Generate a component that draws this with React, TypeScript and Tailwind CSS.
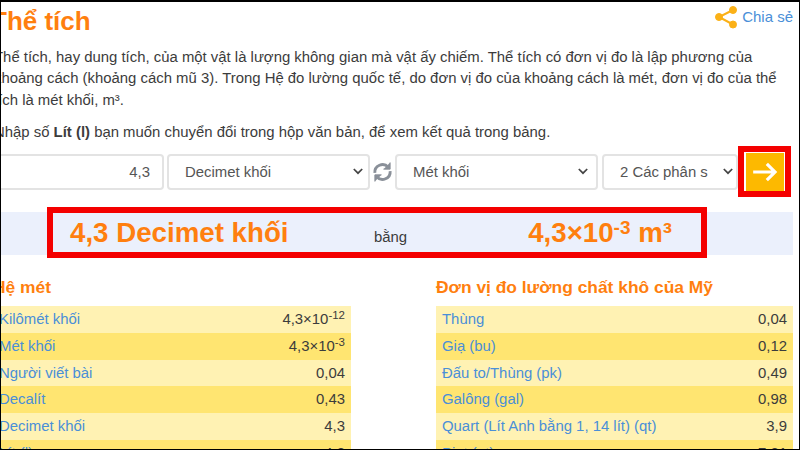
const sans = "font-['Liberation_Sans',Arial,sans-serif]";

const left: [string, React.ReactNode][] = [
  ["Kilômét khối", <>4,3×10<span className="relative top-[-5px] text-[11.5px] leading-none">-12</span></>],
  ["Mét khối", <>4,3×10<span className="relative top-[-5px] text-[11.5px] leading-none">-3</span></>],
  ["Người viết bài", "0,04"],
  ["Decalít", "0,43"],
  ["Decimet khối", "4,3"],
  ["Lít (l)", "4,3"],
];
const right: [string, string][] = [
  ["Thùng", "0,04"],
  ["Giạ (bu)", "0,12"],
  ["Đấu to/Thùng (pk)", "0,49"],
  ["Galông (gal)", "0,98"],
  ["Quart (Lít Anh bằng 1, 14 lít) (qt)", "3,9"],
  ["Pint (pt)", "7,81"],
];

function Table({ rows }: { rows: [string, React.ReactNode][] }) {
  return (
    <div>
      {rows.map(([k, v], i) => (
        <div key={k} className={`flex h-[26.7px] shrink-0 items-center justify-between px-[6px] text-[14.9px] ${i % 2 ? "bg-[#ffe571]" : "bg-[#fff2b3]"}`}>
          <span className="text-[#4a8fd8]">{k}</span>
          <span className="text-[#3c3c3c]">{v}</span>
        </div>
      ))}
    </div>
  );
}

function Select({ label, className }: { label: string; className: string }) {
  return (
    <div className={`flex h-[36px] shrink-0 items-center justify-between rounded-[4px] border-2 border-[#e3e3e3] bg-white text-[#555] ${className}`}>
      <span>{label}</span>
      <svg width="10" height="7" viewBox="0 0 10 7" fill="none" stroke="#444" strokeWidth="1.7"><path d="M.8 1 5 5.2 9.2 1" /></svg>
    </div>
  );
}

export default function App() {
  return (
    <div className={`h-[450px] w-[800px] overflow-hidden border-x border-t-2 border-b border-black bg-white text-[14.9px] text-[#3c3c3c] ${sans}`}>
      <div className="flex h-[46px] items-center justify-between pr-[6px]">
        <h1 className="mb-[8px] ml-[-10px] text-[26px] font-bold text-[#ff7f0f]">Thể tích</h1>
        <div className="mb-[16px] flex items-center gap-[4px]">
          <svg width="24" height="24" viewBox="0 0 24 24" fill="#fbb117" stroke="#fbb117"><circle cx="19" cy="5" r="3.5" /><circle cx="5" cy="12" r="3.5" /><circle cx="19" cy="19.5" r="3.5" /><path d="M19 5 5 12l14 7.5" fill="none" strokeWidth="2" /></svg>
          <span className="text-[15px] text-[#4a8fd8]">Chia sẻ</span>
        </div>
      </div>
      <div className="ml-[-7px] mt-[-1px] w-[790px] leading-[21.3px]">
        <p>Thể tích, hay dung tích, của một vật là lượng không gian mà vật ấy chiếm. Thể tích có đơn vị đo là lập phương của</p>
        <p>khoảng cách (khoảng cách mũ 3). Trong Hệ đo lường quốc tế, do đơn vị đo của khoảng cách là mét, đơn vị đo của thể</p>
        <p>tích là mét khối, m³.</p>
        <p className="mt-[11px]">Nhập số <b>Lít (l)</b> bạn muốn chuyển đổi trong hộp văn bản, để xem kết quả trong bảng.</p>
      </div>
      <div className="mt-[3px] flex h-[51px] items-center">
        <div className="flex h-[36px] w-[163px] shrink-0 items-center justify-end rounded-r-[4px] border-2 border-l-0 border-[#e3e3e3] pr-[12px] text-[#555]">4,3</div>
        <Select label="Decimet khối" className="ml-[3px] w-[203px] pl-[16px] pr-[5px]" />
        <svg className="mx-[2px] shrink-0" width="21" height="24" viewBox="0 0 22 24" fill="none" stroke="#8a9099" strokeWidth="3"><path d="M3 13a8 8 0 0 1 14-6" /><path d="M19 11a8 8 0 0 1-14 6" /><path d="M19 2v7h-7" fill="#8a9099" strokeWidth="1" /><path d="M3 22v-7h7" fill="#8a9099" strokeWidth="1" /></svg>
        <Select label="Mét khối" className="w-[203px] pl-[16px] pr-[8px]" />
        <Select label="2 Các phân s" className="ml-[4px] w-[136px] pl-[16px] pr-[3px]" />
        <div className="flex h-[51px] w-[53px] shrink-0 items-center justify-center border-[6px] border-[#f40000] bg-white">
          <div className="flex h-[38px] w-[38px] items-center justify-center bg-[#fdb900]">
            <svg width="26" height="20" viewBox="0 0 28 22" fill="none" stroke="#fff" strokeWidth="3.5"><path d="M1 11h24M16 2l9 9-9 9" /></svg>
          </div>
        </div>
      </div>
      <div className="mt-[15px] flex h-[43px] w-[792px] bg-[#ebf0fc]">
        <div className="ml-[46px] mt-[-5px] flex h-[51px] w-[660px] shrink-0 items-center border-[6px] border-[#f40000] bg-[#ebf0fc]">
          <span className="ml-[17px] w-[304px] text-[27.7px] font-bold text-[#ff7f0f]">4,3 Decimet khối</span>
          <span className="mt-[8px] text-[14.9px]">bằng</span>
          <span className="ml-[121px] whitespace-pre text-[27.7px] font-bold text-[#ff7f0f]">4,3×10<span className="relative top-[-8px] text-[19px] leading-none">-3</span> m³</span>
        </div>
      </div>
      <div className="mt-[19px] flex">
        <div className="ml-[-8px] w-[358px]">
          <h2 className="h-[32px] text-[17.4px] font-bold leading-[26px] text-[#ff7f0f]">Hệ mét</h2>
          <Table rows={left} />
        </div>
        <div className="ml-[85px] w-[357px]">
          <h2 className="h-[32px] text-[17.4px] font-bold leading-[26px] text-[#ff7f0f]">Đơn vị đo lường chất khô của Mỹ</h2>
          <Table rows={right} />
        </div>
      </div>
    </div>
  );
}
